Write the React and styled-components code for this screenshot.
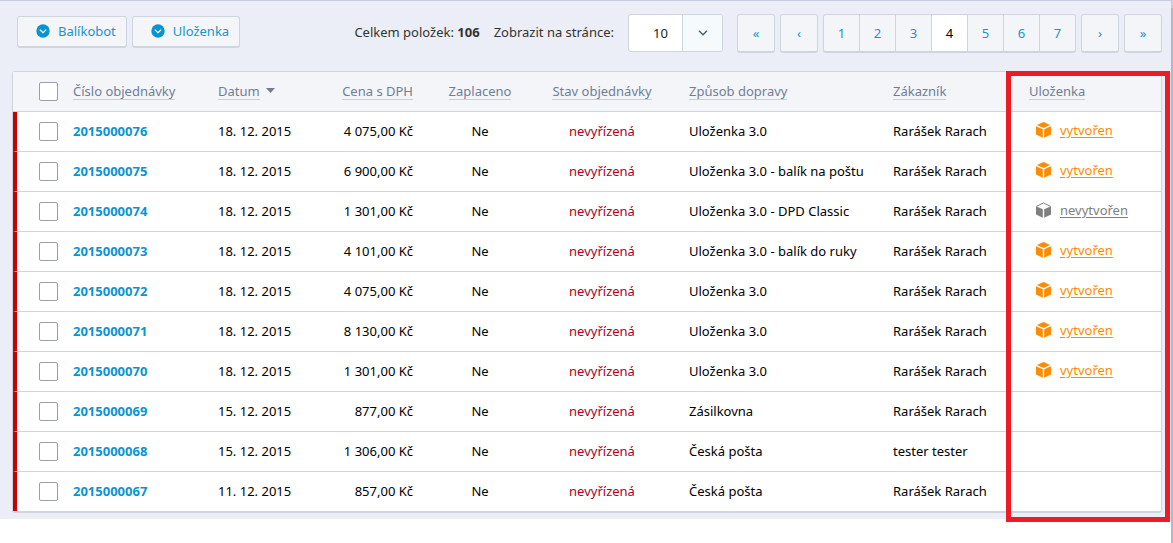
import styled, { createGlobalStyle } from 'styled-components';

const GlobalStyle = createGlobalStyle`
    * {
        box-sizing: border-box;
    }

    body {
        margin: 0;
        background: #fff;
        color: #000;
        font-family: 'Noto Sans', 'Open Sans', sans-serif;
        font-size: 13px;
        line-height: 20px;
    }

    button,
    select {
        font: inherit;
    }
`;

const Page = styled.div`
    min-height: 100vh;
    border-right: 2px solid;
    border-image: linear-gradient(#c9cfe2 10px, #adb8cc 10px) 2;
`;

const Panel = styled.main`
    padding: 13px 9px 6px 12px;
    border-top: 1px solid #c5cce1;
    background: #ebeef6;
`;

const Toolbar = styled.div`
    display: flex;
    justify-content: space-between;
    align-items: flex-start;
    margin-bottom: 18px;
`;

const Actions = styled.div`
    display: flex;
    gap: 5px;
    padding: 2px 0 0 5px;
`;

const ActionButton = styled.button`
    display: flex;
    align-items: center;
    gap: 8px;
    height: 32px;
    padding: 0 10px 1px 18px;
    border: 1px solid #cfd5de;
    border-bottom-width: 2px;
    border-radius: 3px;
    background: #f3f5f9;
    color: #1a94cc;
    cursor: pointer;
`;

const Listing = styled.div`
    display: flex;
    align-items: flex-start;
    gap: 14px;
    color: #333;
`;

const Total = styled.span`
    line-height: 36px;
`;

const PerPage = styled.label`
    display: flex;
    gap: 14px;
    line-height: 36px;
`;

const SelectBox = styled.span`
    position: relative;
    display: flex;
    width: 95px;
    height: 38px;
    border: 1px solid #cfd5de;
    border-radius: 3px;
    background: #fff;
    overflow: hidden;
`;

const Select = styled.select`
    appearance: none;
    width: 100%;
    padding: 0 0 0 24px;
    border: 0;
    background: transparent;
    color: #222;
`;

const SelectArrow = styled.span`
    position: absolute;
    top: 0;
    right: 0;
    bottom: 0;
    display: flex;
    align-items: center;
    justify-content: center;
    width: 40px;
    border-left: 1px solid #cfd5de;
    background: #f5fafd;
    pointer-events: none;
`;

const Pager = styled.nav`
    display: flex;
    gap: 5px;
`;

const PageGroup = styled.div`
    display: flex;
`;

const PageLink = styled.a`
    display: flex;
    align-items: center;
    justify-content: center;
    width: 38px;
    height: 39px;
    border: 1px solid #cfd5de;
    border-bottom-width: 2px;
    border-radius: 3px;
    background: ${(props) => (props.$current ? '#fff' : '#f3f5f9')};
    color: ${(props) => (props.$current ? '#000' : '#1a94cc')};
    text-decoration: none;

    ${PageGroup} > & {
        width: 37px;
        border-radius: 0;
    }
    ${PageGroup} > &:not(:first-child) {
        margin-left: -1px;
    }
    ${PageGroup} > &:first-child {
        border-radius: 3px 0 0 3px;
    }
    ${PageGroup} > &:last-child {
        border-radius: 0 3px 3px 0;
    }
`;

const Card = styled.div`
    position: relative;
    border: 1px solid #ced5df;
    border-bottom-width: 2px;
    border-radius: 3px;
    background: #fff;
`;

const Highlight = styled.div`
    position: absolute;
    top: -1px;
    right: -9px;
    bottom: -11px;
    width: 164px;
    border: 5px solid #ed1c24;
    pointer-events: none;
`;

const Table = styled.table`
    width: 100%;
    table-layout: fixed;
    border-collapse: separate;
    border-spacing: 0;
`;

const Col = styled.col`
    width: ${(props) => (props.$width ? props.$width + 'px' : 'auto')};
`;

const HeadCell = styled.th`
    height: 40px;
    padding: 0 12px 2px ${(props) => props.$indent || 12}px;
    border-bottom: 1px solid #ced5df;
    background: #f3f5f9;
    font-weight: 400;
    text-align: ${(props) => props.$align || 'left'};
    white-space: nowrap;

    &:first-child {
        padding-bottom: 0;
    }
`;

const SortLink = styled.a`
    display: inline-block;
    border-bottom: 1px solid #c9cdd4;
    color: #717d96;
    line-height: 16px;
    text-decoration: none;
`;

const SortArrow = styled.svg`
    margin-left: 6px;
    vertical-align: 3px;
`;

const Cell = styled.td`
    height: 40px;
    padding: 0 12px 2px ${(props) => props.$indent || 12}px;
    border-bottom: 1px solid #ced5df;
    color: ${(props) => props.$color || '#000'};
    text-align: ${(props) => props.$align || 'left'};
    white-space: nowrap;

    tr:last-child > & {
        height: 39px;
        border-bottom: 0;
    }
`;

const MarkedCell = styled(Cell)`
    padding-bottom: 0;
    padding-left: 22px;
    border-left: 4px solid #c80000;
`;

const Checkbox = styled.input`
    appearance: none;
    display: block;
    width: 19px;
    height: 19px;
    margin: 0;
    border: 1px solid #9a9fab;
    border-radius: 2px;
    background: #fff;
`;

const OrderLink = styled.a`
    color: #0a94cf;
    font-weight: 700;
    text-decoration: none;
`;

const Parcel = styled.a`
    display: flex;
    align-items: center;
    gap: 9px;
    padding-bottom: 2px;
    color: ${(props) => (props.$created ? '#ff8c00' : '#808080')};
    text-underline-offset: 2px;
`;

const pages = [1, 2, 3, 4, 5, 6, 7];

const columns = [
    { title: 'Číslo objednávky', width: 145 },
    { title: 'Datum', width: 114, sorted: true },
    { title: 'Cena s DPH', width: 105, align: 'right' },
    { title: 'Zaplaceno', width: 110, align: 'center' },
    { title: 'Stav objednávky', width: 134, align: 'center' },
    { title: 'Způsob dopravy', indent: 20 },
    { title: 'Zákazník', width: 136 },
    { title: 'Uloženka', width: 144 },
];

const orders = [
    ['2015000076', '18. 12. 2015', '4 075,00 Kč', 'Uloženka 3.0', 'Rarášek Rarach', 'vytvořen'],
    ['2015000075', '18. 12. 2015', '6 900,00 Kč', 'Uloženka 3.0 - balík na poštu', 'Rarášek Rarach', 'vytvořen'],
    ['2015000074', '18. 12. 2015', '1 301,00 Kč', 'Uloženka 3.0 - DPD Classic', 'Rarášek Rarach', 'nevytvořen'],
    ['2015000073', '18. 12. 2015', '4 101,00 Kč', 'Uloženka 3.0 - balík do ruky', 'Rarášek Rarach', 'vytvořen'],
    ['2015000072', '18. 12. 2015', '4 075,00 Kč', 'Uloženka 3.0', 'Rarášek Rarach', 'vytvořen'],
    ['2015000071', '18. 12. 2015', '8 130,00 Kč', 'Uloženka 3.0', 'Rarášek Rarach', 'vytvořen'],
    ['2015000070', '18. 12. 2015', '1 301,00 Kč', 'Uloženka 3.0', 'Rarášek Rarach', 'vytvořen'],
    ['2015000069', '15. 12. 2015', '877,00 Kč', 'Zásilkovna', 'Rarášek Rarach'],
    ['2015000068', '15. 12. 2015', '1 306,00 Kč', 'Česká pošta', 'tester tester'],
    ['2015000067', '11. 12. 2015', '857,00 Kč', 'Česká pošta', 'Rarášek Rarach'],
];

function CircleChevron() {
    return (
        <svg width="14" height="14" viewBox="0 0 14 14" aria-hidden="true">
            <circle cx="7" cy="7" r="6.7" fill="#0a94cf" />
            <path d="M3.8 5.6 7 8.7l3.2-3.1" fill="none" stroke="#fff" strokeWidth="1.2" />
        </svg>
    );
}

function BoxIcon({ created }) {
    return (
        <svg width="15" height="16" viewBox="0 0 15 16" fill="currentColor" aria-hidden="true">
            {created ? (
                <path d="M7.5 0 14.2 3 7.5 6 .8 3z" />
            ) : (
                <path d="M.4 4.4 7.5.9l7.1 3.5" fill="none" stroke="currentColor" strokeWidth="1" />
            )}
            <path d="M0 4.2 6.8 7.3v8.5L0 12.4zM15 4.2 8.2 7.3v8.5l6.8-3.4z" />
        </svg>
    );
}

function App() {
    return (
        <Page>
            <GlobalStyle />
            <Panel>
                <Toolbar>
                    <Actions>
                        <ActionButton type="button">
                            <CircleChevron />
                            Balíkobot
                        </ActionButton>
                        <ActionButton type="button">
                            <CircleChevron />
                            Uloženka
                        </ActionButton>
                    </Actions>
                    <Listing>
                        <Total>
                            Celkem položek: <b>106</b>
                        </Total>
                        <PerPage>
                            Zobrazit na stránce:
                            <SelectBox>
                                <Select defaultValue="10">
                                    <option>10</option>
                                    <option>20</option>
                                    <option>50</option>
                                </Select>
                                <SelectArrow>
                                    <svg width="10" height="6" viewBox="0 0 10 6" aria-hidden="true">
                                        <path d="M1 .8 5 4.8l4-4" fill="none" stroke="#47636e" strokeWidth="1.4" />
                                    </svg>
                                </SelectArrow>
                            </SelectBox>
                        </PerPage>
                        <Pager aria-label="Stránkování">
                            <PageLink href="#first">«</PageLink>
                            <PageLink href="#prev">‹</PageLink>
                            <PageGroup>
                                {pages.map((page) => (
                                    <PageLink key={page} href={'#page-' + page} $current={page === 4}>
                                        {page}
                                    </PageLink>
                                ))}
                            </PageGroup>
                            <PageLink href="#next">›</PageLink>
                            <PageLink href="#last">»</PageLink>
                        </Pager>
                    </Listing>
                </Toolbar>

                <Card>
                    <Table>
                        <colgroup>
                            <Col $width={48} />
                            {columns.map((column) => (
                                <Col key={column.title} $width={column.width} />
                            ))}
                        </colgroup>
                        <thead>
                            <tr>
                                <HeadCell $indent={26}>
                                    <Checkbox type="checkbox" aria-label="Vybrat vše" />
                                </HeadCell>
                                {columns.map((column) => (
                                    <HeadCell key={column.title} $align={column.align} $indent={column.indent}>
                                        <SortLink href="#sort">{column.title}</SortLink>
                                        {column.sorted && (
                                            <SortArrow width="9" height="5" viewBox="0 0 9 5" aria-hidden="true">
                                                <path d="M0 0h9L4.5 5z" fill="#717d96" />
                                            </SortArrow>
                                        )}
                                    </HeadCell>
                                ))}
                            </tr>
                        </thead>
                        <tbody>
                            {orders.map(([number, date, price, delivery, customer, parcel]) => (
                                <tr key={number}>
                                    <MarkedCell>
                                        <Checkbox type="checkbox" aria-label={'Vybrat ' + number} />
                                    </MarkedCell>
                                    <Cell>
                                        <OrderLink href={'#' + number}>{number}</OrderLink>
                                    </Cell>
                                    <Cell>{date}</Cell>
                                    <Cell $align="right">{price}</Cell>
                                    <Cell $align="center">Ne</Cell>
                                    <Cell $align="center" $color="#b00020">
                                        nevyřízená
                                    </Cell>
                                    <Cell $indent={20}>{delivery}</Cell>
                                    <Cell>{customer}</Cell>
                                    <Cell $indent={19}>
                                        {parcel && (
                                            <Parcel href="#parcel" $created={parcel === 'vytvořen'}>
                                                <BoxIcon created={parcel === 'vytvořen'} />
                                                {parcel}
                                            </Parcel>
                                        )}
                                    </Cell>
                                </tr>
                            ))}
                        </tbody>
                    </Table>
                    <Highlight />
                </Card>
            </Panel>
        </Page>
    );
}

export default App;
